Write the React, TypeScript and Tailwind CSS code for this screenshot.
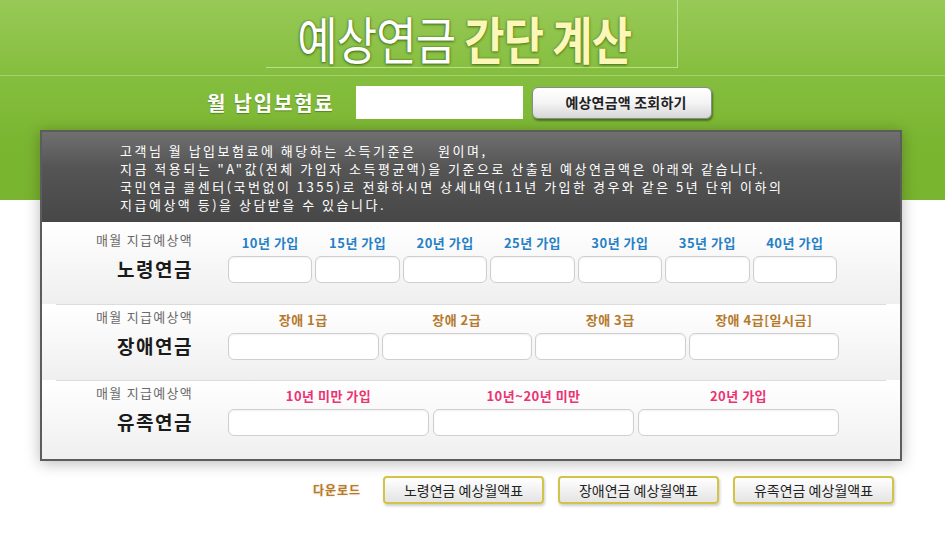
import React from "react";

const Field = () => (
  <div className="h-[27px] rounded-[6px] border border-[#cfcfcf] bg-white shadow-[inset_0_1px_2px_rgba(0,0,0,0.06)]" />
);

function Row({
  title,
  headers,
  cols,
  color,
  pad,
}: {
  title: string;
  headers: string[];
  cols: string;
  color: string;
  pad: string;
}) {
  return (
    <div className={`flex ${pad}`}>
      <div className="w-[151px] shrink-0 text-right">
        <div className="text-[13px] leading-[16px] tracking-[1.3px] text-[#6a6a6a]">매월 지급예상액</div>
        <div className="mt-[9px] text-[19px] font-bold leading-[24px] tracking-[1.5px] text-[#1a1a1a]">{title}</div>
      </div>
      <div className="ml-[35px] pt-[3px]">
        <div className={`grid ${cols}`}>
          {headers.map((h) => (
            <div key={h} className={`text-center text-[13px] font-bold leading-[16px] tracking-[0.5px] ${color}`}>
              {h}
            </div>
          ))}
        </div>
        <div className={`mt-[5px] grid ${cols}`}>
          {headers.map((h) => (
            <Field key={h} />
          ))}
        </div>
      </div>
    </div>
  );
}

const Sep = () => (
  <div className="mx-[14px] border-t border-[#dcdcdc] border-b border-b-white" />
);

export default function App() {
  return (
    <div className="min-h-[541px] w-full bg-white font-['Noto_Sans_CJK_KR','Noto_Sans',sans-serif]">
      <div className="bg-[linear-gradient(to_bottom,#98c957_0px,#86bf40_70px,#7bb631_140px,#79b42f_200px,#ffffff_200px)]">
        {/* title */}
        <div className="flex justify-center">
          <div className="ml-[-2px] flex h-[68px] w-[412px] items-center justify-center border-r border-b border-[#b9de8c] pt-[8px] pr-[14px]">
            <span className="inline-block origin-center scale-x-[0.86] whitespace-nowrap text-[51px] leading-[56px] tracking-[-1px]">
              <span className="text-white [text-shadow:0_0_2px_#3f6e10,0_1px_3px_#3f6e10]">예상연금</span>
              <span className="font-bold text-[#fbf7b8] [text-shadow:0_0_2px_#5b7d1a,0_1px_3px_#4d7412]"> 간단 계산</span>
            </span>
          </div>
        </div>
        <div className="mt-[7px] h-px bg-[#a7d271]" />
        {/* input row */}
        <div className="mt-[10px] flex items-center pl-[207px]">
          <div className="w-[129px] whitespace-nowrap text-[20px] font-bold tracking-[1.8px] text-white [text-shadow:0_1px_1px_rgba(60,100,20,0.6)]">
            월 납입보험료
          </div>
          <div className="ml-[20px] h-[33px] w-[167px] bg-white" />
          <button className="ml-[9px] h-[32px] w-[180px] rounded-[6px] border border-[#8a8a8a] bg-linear-to-b from-white via-[#f4f4f4] to-[#d6d6d6] pl-[8px] text-[14px] font-bold tracking-[0.2px] text-[#222] shadow-[1px_2px_2px_rgba(40,70,10,0.6)]">
            예상연금액 조회하기
          </button>
        </div>
        {/* main box */}
        <div className="ml-[40px] mt-[11px] w-[862px] border-2 border-[#5c5c5c] bg-white shadow-[0_2px_14px_rgba(0,0,0,0.28)]">
          <div className="h-[90px] bg-[linear-gradient(to_bottom,#707070_0px,#555555_35px,#474747_90px)] pl-[78px] pt-[10px] text-[13px] leading-[18px] tracking-[2.5px] text-white">
            <div className="whitespace-pre">고객님 월 납입보험료에 해당하는 소득기준은    원이며,</div>
            <div className="whitespace-pre">지금 적용되는 "A"값(전체 가입자 소득평균액)을 기준으로 산출된 예상연금액은 아래와 같습니다.</div>
            <div className="whitespace-pre">국민연금 콜센터(국번없이 1355)로 전화하시면 상세내역(11년 가입한 경우와 같은 5년 단위 이하의</div>
            <div className="whitespace-pre">지급예상액 등)을 상담받을 수 있습니다.</div>
          </div>
          <div className="bg-linear-to-b from-white to-[#efefef]">
            <Row
              pad="pt-[10px] pb-[21px]"
              title="노령연금"
              cols="w-[609px] grid-cols-7 gap-x-[3px]"
              color="text-[#2680c6]"
              headers={["10년 가입", "15년 가입", "20년 가입", "25년 가입", "30년 가입", "35년 가입", "40년 가입"]}
            />
          </div>
          <Sep />
          <div className="bg-linear-to-b from-white to-[#efefef]">
            <Row
              pad="pt-[3px] pb-[20px]"
              title="장애연금"
              cols="w-[611px] grid-cols-4 gap-x-[3px]"
              color="text-[#b67a2c]"
              headers={["장애 1급", "장애 2급", "장애 3급", "장애 4급[일시금]"]}
            />
          </div>
          <Sep />
          <div className="bg-linear-to-b from-white to-[#efefef]">
            <Row
              pad="pt-[3px] pb-[23px]"
              title="유족연금"
              cols="w-[611px] grid-cols-3 gap-x-[4px]"
              color="text-[#ec3372]"
              headers={["10년 미만 가입", "10년~20년 미만", "20년 가입"]}
            />
          </div>
        </div>
      </div>
      {/* download row */}
      <div className="mt-[15px] flex items-center pl-[313px]">
        <div className="w-[49px] whitespace-nowrap text-[12px] font-bold tracking-[1px] text-[#b67a2c] [text-shadow:0_0_2px_rgba(182,122,44,0.4)]">다운로드</div>
        <div className="ml-[21px] flex gap-x-[14px]">
          {["노령연금 예상월액표", "장애연금 예상월액표", "유족연금 예상월액표"].map((t) => (
            <button
              key={t}
              className="h-[28px] w-[161px] rounded-[4px] border-2 border-[#d2c447] bg-linear-to-b from-white to-[#e4e4e4] text-[14px] text-[#222] shadow-[1px_2px_3px_rgba(0,0,0,0.2)]"
            >
              {t}
            </button>
          ))}
        </div>
      </div>
    </div>
  );
}
